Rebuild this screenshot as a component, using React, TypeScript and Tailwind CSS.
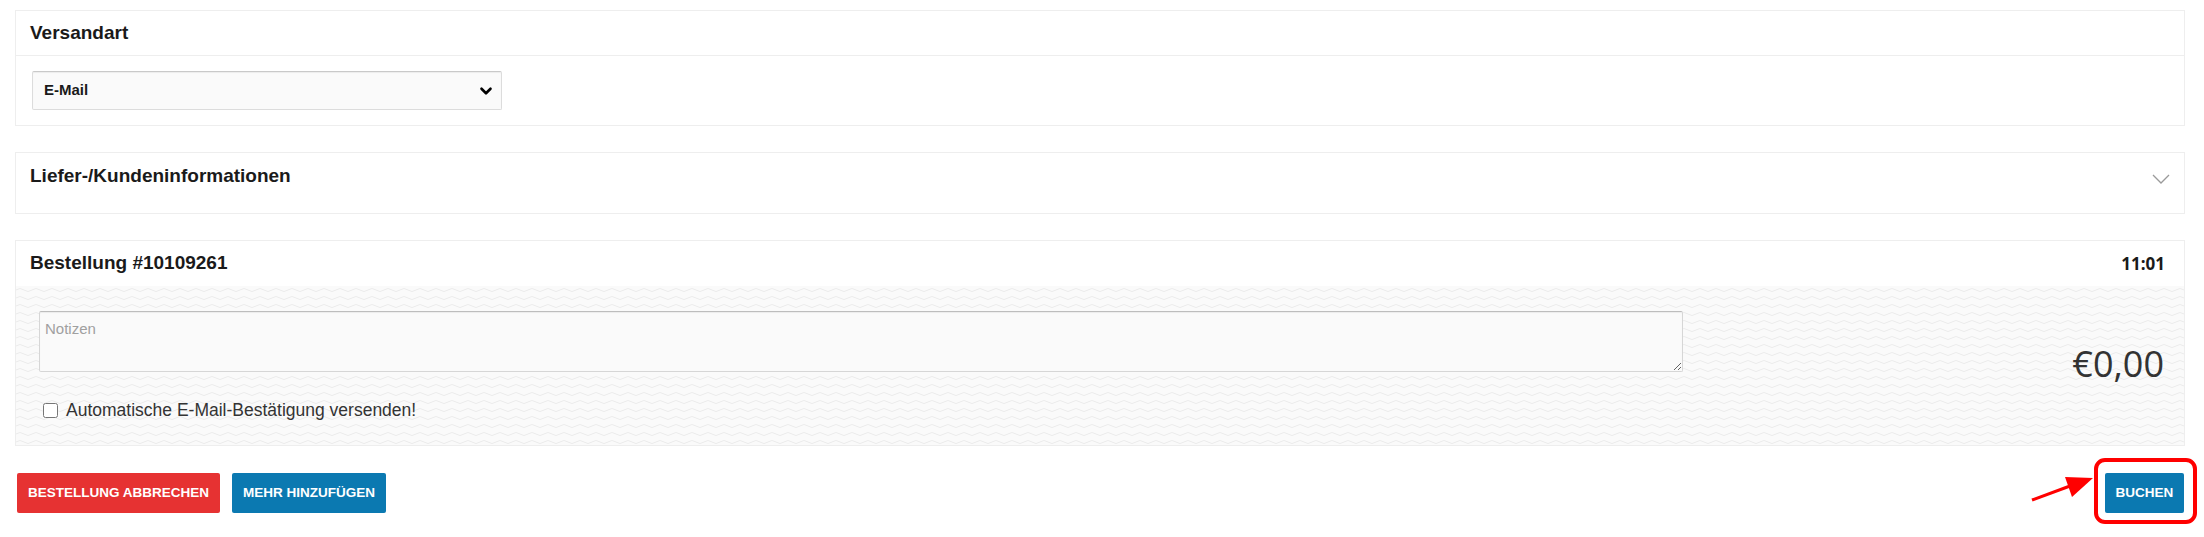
import { ChevronDown } from 'lucide-react';

const sans = "font-['Liberation_Sans',Arial,sans-serif]";

const wave =
  'bg-[#fafafa] bg-[url(data:image/svg+xml,%3Csvg%20xmlns=%22http://www.w3.org/2000/svg%22%20width=%2216%22%20height=%228%22%3E%3Cpath%20d=%22M0%204Q4%201%208%204T16%204%22%20fill=%22none%22%20stroke=%22%23ebebeb%22/%3E%3C/svg%3E)]';

const Title = ({ children }: { children: React.ReactNode }) => (
  <h3 className={`${sans} text-[19px] font-bold text-[#1a1a1a]`}>{children}</h3>
);

export default function App() {
  return (
    <div className="min-h-[537px] w-full bg-white pl-[15px] pr-[19px] pt-[10px]">
      {/* Versandart */}
      <div className="border border-[#eeeeee] bg-white">
        <div className="flex h-[45px] items-center border-b border-[#eeeeee] pl-[14px]">
          <Title>Versandart</Title>
        </div>
        <div className="px-[16px] pb-[15px] pt-[15px]">
          <div className="flex h-[39px] w-[470px] items-center justify-between rounded-[2px] border border-[#dcdcdc] border-t-[#c9c9c9] bg-[#fafafa] pl-[11px] pr-[6px] shadow-[inset_0_1px_1px_rgba(0,0,0,0.06)]">
            <span className={`${sans} text-[15px] font-bold text-[#1a1a1a]`}>E-Mail</span>
            <ChevronDown className="h-[18px] w-[18px] text-black" strokeWidth={3.5} />
          </div>
        </div>
      </div>

      {/* Liefer-/Kundeninformationen */}
      <div className="mt-[26px] h-[62px] border border-[#eeeeee] bg-white">
        <div className="flex h-[46px] items-center justify-between pl-[14px] pr-[14px]">
          <Title>Liefer-/Kundeninformationen</Title>
          <svg width="18" height="10" viewBox="0 0 18 10" className="mt-[6px]">
            <path d="M1 1 L9 9 L17 1" fill="none" stroke="#9a9a9a" strokeWidth="1.3" />
          </svg>
        </div>
      </div>

      {/* Bestellung */}
      <div className="mt-[26px] border border-[#eeeeee] bg-white">
        <div className="flex h-[45px] items-center justify-between pl-[14px] pr-[19px]">
          <Title>Bestellung #10109261</Title>
          <span className="font-['Open_Sans',sans-serif] text-[17px] font-bold text-[#1a1a1a]">11:01</span>
        </div>
        <div className={`${wave} flex items-center justify-between pb-[22px] pl-[23px] pr-[20px] pt-[25px]`}>
          <div>
            <textarea
              placeholder="Notizen"
              className={`${sans} block h-[61px] w-[1644px] rounded-[2px] border border-[#d6d6d6] border-t-[#bdbdbd] bg-[#fafafa] px-[5px] py-[6px] text-[15px] text-[#333] placeholder:text-[#a0a0a0] shadow-[inset_0_1px_1px_rgba(0,0,0,0.06)]`}
            />
            <label className="mt-[25px] flex items-center gap-[8px] pl-[4px]">
              <input type="checkbox" className="h-[15px] w-[15px]" />
              <span className={`${sans} text-[17.5px] text-[#333]`}>Automatische E-Mail-Bestätigung versenden!</span>
            </label>
          </div>
          <div className="mb-[6px] font-['Open_Sans',sans-serif] text-[36px] text-[#333]">€0,00</div>
        </div>
      </div>

      {/* Actions */}
      <div className="mt-[27px] flex items-center justify-between">
        <div className="flex gap-[12px] pl-[2px]">
          <button className={`${sans} h-[40px] rounded-[2px] bg-[#e63232] px-[11px] text-[13.5px] font-bold text-white`}>
            BESTELLUNG ABBRECHEN
          </button>
          <button className={`${sans} h-[40px] rounded-[2px] bg-[#0b79b1] px-[11px] text-[13.5px] font-bold text-white`}>
            MEHR HINZUFÜGEN
          </button>
        </div>
        <div className="relative">
          <svg width="66" height="30" viewBox="0 0 66 30" className="absolute left-[-64px] top-[3px]">
            <line x1="2" y1="24" x2="40" y2="10" stroke="#ff0000" strokeWidth="3" />
            <polygon points="63,2 42,21 35,1" fill="#ff0000" />
          </svg>
          <div className="-mb-[11px] -mr-[12px] -mt-[15px] rounded-[11px] border-[4px] border-[#ff0000] pb-[7px] pl-[7px] pr-[9px] pt-[11px]">
            <button className={`${sans} h-[40px] w-[79px] rounded-[2px] bg-[#0b79b1] text-[13.5px] font-bold text-white`}>
              BUCHEN
            </button>
          </div>
        </div>
      </div>
    </div>
  );
}
